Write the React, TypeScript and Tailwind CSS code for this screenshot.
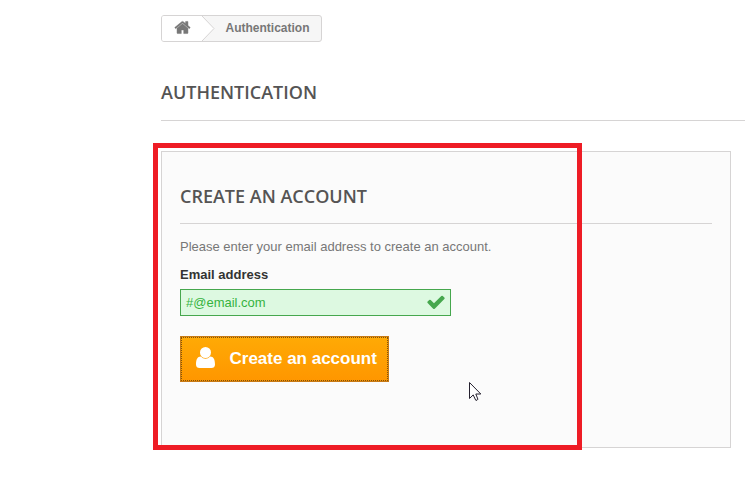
function HomeIcon() {
  return (
    <svg viewBox="0 0 1792 1792" className="ml-[11.5px] mt-[2.5px] h-[17px] w-[17px] shrink-0 fill-[#777777] stroke-[#777777] stroke-[50]">
      <path d="M1472 992v480q0 26-19 45t-45 19h-384v-384h-256v384h-384q-26 0-45-19t-19-45v-480q0-1 .5-3t.5-3l575-474 575 474q1 2 1 6zm223-69l-62 74q-8 9-21 11h-3q-13 0-21-7l-692-577-692 577q-12 8-24 7-13-2-21-11l-62-74q-8-10-7-23.5t11-21.5l719-599q32-26 76-26t76 26l244 204v-195q0-14 9-23t23-9h192q14 0 23 9t9 23v408l219 182q10 8 11 21.5t-7 23.5z" />
    </svg>
  );
}

function CheckIcon() {
  return (
    <svg viewBox="0 0 1792 1792" className="-mt-[2px] h-[20px] w-[20px] shrink-0 fill-[#46a74e]">
      <path d="M1671 566q0 40-28 68l-724 724-136 136q-28 28-68 28t-68-28l-136-136-362-362q-28-28-28-68t28-68l136-136q28-28 68-28t68 28l294 295 656-657q28-28 68-28t68 28l136 136q28 28 28 68z" />
    </svg>
  );
}

function UserIcon() {
  return (
    <svg viewBox="0 0 19 21" className="ml-[15px] mt-[10px] h-[21px] w-[19px] shrink-0 fill-white">
      <circle cx="9.5" cy="5.5" r="5.5" />
      <path d="M4.9 9.6Q6.8 11.8 9.5 11.8T14.1 9.6C17.7 9.6 19 12.9 19 17.4C19 19.7 17.6 21 15.4 21H3.6C1.4 21 0 19.7 0 17.4C0 12.9 1.3 9.6 4.9 9.6Z" />
    </svg>
  );
}

function Breadcrumb() {
  return (
    <nav className="flex h-[27px] w-[161px] overflow-hidden rounded-[3px] border border-[#d6d4d4] bg-[#f6f6f6] text-[12px] leading-[24px] font-bold text-[#777777]">
      <div className="flex w-[40px] shrink-0 bg-white">
        <HomeIcon />
      </div>
      <svg viewBox="0 0 13 25" className="h-[25px] w-[13px] shrink-0">
        <path d="M0 0L12 12.5L0 25Z" fill="#fff" />
        <path d="M0 0L12 12.5L0 25" fill="none" stroke="#d6d4d4" />
      </svg>
      <span className="ml-[10.5px]">Authentication</span>
    </nav>
  );
}

function AccountForm() {
  return (
    <section className="h-[297px] w-[570px] border border-[#d6d4d4] bg-[#fbfbfb] px-[18px] pt-[31px]">
      <h3 className="h-[41px] border-b border-[#d6d4d4] font-['Open_Sans',sans-serif] text-[18px] leading-[27px] font-semibold text-[#555454]">
        CREATE AN ACCOUNT
      </h3>
      <p className="mt-[14px] text-[13px] leading-[18px] text-[#777777]">
        Please enter your email address to create an account.
      </p>
      <label className="mt-[10px] block text-[13px] leading-[18px] font-bold text-[#333333]">Email address</label>
      <div className="mt-[5px] flex h-[27px] w-[271px] items-center justify-between border border-[#46a74e] bg-[#ddf9e1] pr-[4px] pl-[5px] text-[13px] text-[#35b33f]">
        <span>#@email.com</span>
        <CheckIcon />
      </div>
      <button className="relative mt-[20px] flex h-[46px] w-[209px] border border-[#c77a16] bg-linear-to-b from-[#ffaa05] to-[#ff9600] text-left text-[17px] leading-[44px] font-bold text-white">
        <svg className="absolute inset-0 h-[44px] w-[207px]" viewBox="0 0 207 44">
          <path
            d="M0 .5H207M0 43.5H207M.5 1V43M206.5 1V43"
            fill="none"
            stroke="#80520c"
            strokeDasharray="1 1"
          />
        </svg>
        <UserIcon />
        <span className="ml-[14.5px] whitespace-nowrap">Create an account</span>
      </button>
    </section>
  );
}

export default function App() {
  return (
    <div className="relative h-[503px] w-[745px] overflow-hidden bg-white pt-[15px] pl-[161px] font-['Liberation_Sans',Arial,sans-serif]">
      <Breadcrumb />
      <h1 className="mt-[37px] mb-[30px] h-[42px] border-b border-[#d6d4d4] font-['Open_Sans',sans-serif] text-[18px] leading-[27px] font-semibold text-[#555454]">
        AUTHENTICATION
      </h1>
      <AccountForm />
      <div className="absolute top-[143px] left-[153px] h-[307px] w-[429px] border-[5px] border-[#ee1c25]" />
      <svg viewBox="0 0 13 20" className="absolute top-[382px] left-[469px] h-[20px] w-[13px]">
        <path d="M.5 .5V16.5L4.2 12.9L6.7 18.2Q8.2 18.8 8.9 17.2L6.8 12H11.8Z" fill="#fff" stroke="#24202e" />
      </svg>
    </div>
  );
}
